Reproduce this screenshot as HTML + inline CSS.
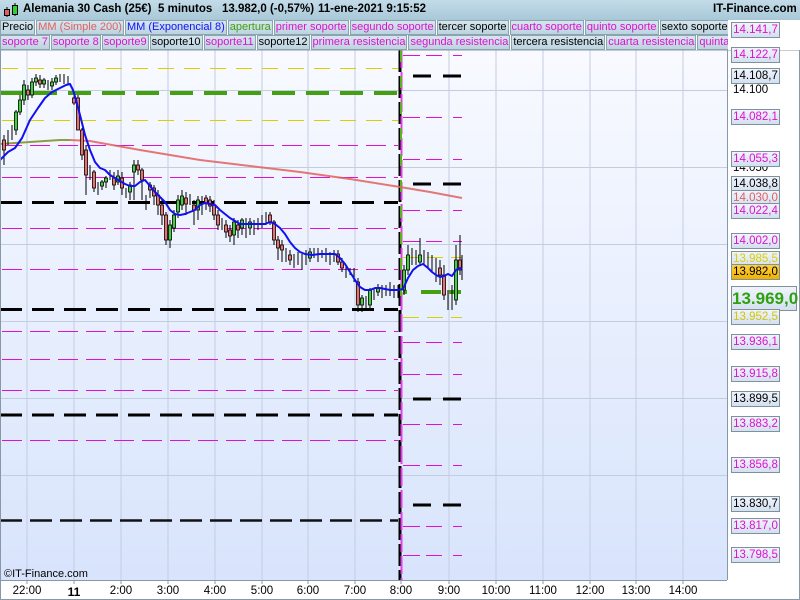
<!DOCTYPE html>
<html><head><meta charset="utf-8"><style>
*{margin:0;padding:0;box-sizing:border-box}
body{width:800px;height:600px;overflow:hidden;background:#fff;font-family:"Liberation Sans",sans-serif;position:relative}
#title{position:absolute;left:0;top:0;width:800px;height:20px;background:linear-gradient(#c4dce8,#a8c8d8);font-weight:bold;font-size:11.5px;color:#000;white-space:nowrap}
#title span{position:absolute;top:3px}
.row{position:absolute;left:0;width:728px;height:15px;background:#fff;white-space:nowrap;overflow:hidden;font-size:11px}
.row b{display:inline-block;font-weight:normal;height:15px;line-height:13px;padding:0 1px;background:linear-gradient(#d6e6ee,#bcd4e0);border:1px solid #8aa4b0;margin-right:1px;vertical-align:top}
.m{color:#e010d0}.k{color:#000}
.lab{position:absolute;left:731px;width:49px;height:16px;border:1px solid #7e929c;background:linear-gradient(#f0f4fc,#d4e0f0);font-size:11.5px;line-height:14px;text-align:center}
.pl{position:absolute;left:733px;font-size:11.5px}
.tx{position:absolute;top:585px;font-size:11.5px;transform:translateX(-50%)}
</style></head><body>
<div id="title">
<svg style="position:absolute;left:3px;top:2px" width="18" height="16"><line x1="4" y1="5" x2="4" y2="15" stroke="#000"/><rect x="1.5" y="7.5" width="5" height="6" fill="#e06060" stroke="#000"/><line x1="12" y1="1" x2="12" y2="14" stroke="#000"/><rect x="9.5" y="3.5" width="5" height="9" fill="#30d030" stroke="#000"/></svg>
<span style="left:23px">Alemania 30 Cash (25€)</span>
<span style="left:158px">5 minutos</span>
<span style="left:222px">13.982,0 (-0,57%)</span>
<span style="left:318px">11-ene-2021 9:15:52</span>
<span style="left:713px">IT-Finance.com</span>
</div>
<div class="row" style="top:20px"><b class="k">Precio</b><b style="color:#e06060">MM (Simple 200)</b><b style="color:#1010ff">MM (Exponencial 8)</b><b style="color:#40a010">apertura</b><b class="m">primer soporte</b><b class="m">segundo soporte</b><b class="k">tercer soporte</b><b class="m">cuarto soporte</b><b class="m">quinto soporte</b><b class="k">sexto soporte</b></div>
<div class="row" style="top:35px"><b class="m">soporte 7</b><b class="m">soporte 8</b><b class="m">soporte9</b><b class="k">soporte10</b><b class="m">soporte11</b><b class="k">soporte12</b><b class="m">primera resistencia</b><b class="m">segunda resistencia</b><b class="k">tercera resistencia</b><b class="m">cuarta resistencia</b><b class="m">quinta resistencia</b></div>

<svg style="position:absolute;left:0;top:50px" width="800" height="550" viewBox="0 50 800 550">
<defs><linearGradient id="bg" x1="0" y1="0" x2="0" y2="1"><stop offset="0" stop-color="#f8faff"/><stop offset="1" stop-color="#d8e4fc"/></linearGradient></defs>
<rect x="0" y="50" width="727" height="530" fill="url(#bg)"/>
<g stroke="#c4cce0" stroke-width="1">
<line x1="27" y1="50" x2="27" y2="580"/><line x1="74" y1="50" x2="74" y2="580"/><line x1="121" y1="50" x2="121" y2="580"/><line x1="168" y1="50" x2="168" y2="580"/><line x1="215" y1="50" x2="215" y2="580"/><line x1="262" y1="50" x2="262" y2="580"/><line x1="308" y1="50" x2="308" y2="580"/><line x1="355" y1="50" x2="355" y2="580"/><line x1="449" y1="50" x2="449" y2="580"/><line x1="496" y1="50" x2="496" y2="580"/><line x1="543" y1="50" x2="543" y2="580"/><line x1="590" y1="50" x2="590" y2="580"/><line x1="636" y1="50" x2="636" y2="580"/><line x1="683" y1="50" x2="683" y2="580"/>
<line x1="0" y1="90.5" x2="727" y2="90.5"/><line x1="0" y1="167.5" x2="727" y2="167.5"/><line x1="0" y1="244.5" x2="727" y2="244.5"/><line x1="0" y1="321.5" x2="727" y2="321.5"/><line x1="0" y1="398.5" x2="727" y2="398.5"/><line x1="0" y1="475.5" x2="727" y2="475.5"/>
</g>
<g fill="none">
<g stroke="#d8d000" stroke-width="1" stroke-dasharray="16 10"><line x1="2" y1="68.5" x2="398" y2="68.5"/><line x1="2" y1="120.5" x2="398" y2="120.5"/></g>
<line x1="0" y1="93" x2="398" y2="93" stroke="#44a010" stroke-width="4" stroke-dasharray="23 11"/>
<g stroke="#e010d0" stroke-width="1" stroke-dasharray="20 8"><line x1="2" y1="145.5" x2="398" y2="145.5"/><line x1="2" y1="177.5" x2="398" y2="177.5"/><line x1="2" y1="228.5" x2="398" y2="228.5"/><line x1="2" y1="269.5" x2="398" y2="269.5"/><line x1="2" y1="331.5" x2="398" y2="331.5"/><line x1="2" y1="359.5" x2="398" y2="359.5"/><line x1="2" y1="390.5" x2="398" y2="390.5"/><line x1="2" y1="440.5" x2="398" y2="440.5"/></g>
<g stroke="#000" stroke-width="3" stroke-dasharray="22 10"><line x1="0" y1="202.5" x2="398" y2="202.5"/><line x1="0" y1="309.5" x2="398" y2="309.5"/><line x1="0" y1="415" x2="398" y2="415"/></g>
<line x1="0" y1="520.5" x2="398" y2="520.5" stroke="#111" stroke-width="2.5" stroke-dasharray="22 8"/>
<g stroke="#e010d0" stroke-width="1" stroke-dasharray="17 6 16 11 12 100"><line x1="403" y1="55.5" x2="462" y2="55.5"/><line x1="403" y1="117.5" x2="462" y2="117.5"/><line x1="403" y1="159.5" x2="462" y2="159.5"/><line x1="403" y1="210.5" x2="462" y2="210.5"/><line x1="403" y1="241.5" x2="462" y2="241.5"/><line x1="403" y1="342.5" x2="462" y2="342.5"/><line x1="403" y1="374.5" x2="462" y2="374.5"/><line x1="403" y1="424.5" x2="462" y2="424.5"/><line x1="403" y1="465.5" x2="462" y2="465.5"/><line x1="403" y1="526.5" x2="462" y2="526.5"/><line x1="403" y1="555.5" x2="462" y2="555.5"/></g>
<g stroke="#000" stroke-width="3" stroke-dasharray="0 13 18 12 18 100"><line x1="400" y1="76" x2="462" y2="76"/><line x1="400" y1="184" x2="462" y2="184"/><line x1="400" y1="399" x2="462" y2="399"/><line x1="400" y1="505" x2="462" y2="505"/></g>
<g stroke="#d8d000" stroke-width="1" stroke-dasharray="16 8"><line x1="403" y1="257.5" x2="462" y2="257.5"/><line x1="403" y1="317.5" x2="462" y2="317.5"/></g>
<line x1="403" y1="292" x2="462" y2="292" stroke="#44a010" stroke-width="4" stroke-dasharray="4 14 20 8 12 100"/>
<line x1="400" y1="50" x2="400" y2="580" stroke="#000" stroke-width="3" stroke-dasharray="22 4"/>
<line x1="401.5" y1="50" x2="401.5" y2="580" stroke="#e040e0" stroke-width="2" stroke-dasharray="18 4"/>
<line x1="401" y1="50" x2="401" y2="310" stroke="#60b020" stroke-width="2" stroke-dasharray="12 14"/>
</g>
<polyline fill="none" stroke="#8aa040" stroke-width="2" points="0,144 30,142 60,140 70,140"/>
<polyline fill="none" stroke="#e06060" stroke-width="2" opacity="0.85" points="70,140 90,141 140,150 200,160 250,166 300,172 350,179 400,187 430,192 462,198"/>
<g stroke="#000" stroke-width="1">
<path d="M4 135V165M8 130V145M12 125V140M16 110V135M20 95V115M24 80V105M28 85V100M32 78V98M36 74V86M40 75V88M44 78V88M48 80V90M52 78V90M56 75V85M60 74V82M64 74V84M68 76V85M74 95V105M78 95V130M82 128V160M86 145V195M90 165V180M94 170V192M98 182V195M102 180V190M106 176V188M110 170V180M114 172V190M118 170V185M122 172V195M126 188V198M130 182V200M134 160V200M138 160V175M142 168V200M146 195V210M150 182V198M154 185V205M158 190V215M162 200V225M166 212V245M170 220V248M174 210V232M178 195V218M182 190V210M186 192V215M190 194V205M194 200V225M198 196V220M202 196V215M206 195V210M210 196V212M214 200V220M218 210V230M222 218V230M226 220V238M230 225V242M234 218V245M238 220V238M242 218V235M246 218V238M250 218V235M254 220V235M258 218V230M262 215V228M266 212V225M270 212V225M274 220V245M278 236V260M282 240V262M286 248V262M290 250V265M294 254V268M298 252V265M302 254V270M306 250V265M310 248V262M314 248V258M318 248V262M322 250V258M326 248V262M330 252V265M334 250V262M338 250V265M342 258V272M346 265V278M350 268V275M354 268V282M358 278V312M362 295V312M366 296V310M370 288V310M374 288V300M378 284V296M382 285V298M386 285V296M390 282V296M394 285V298M398 285V298M404 265V295M408 245V275M412 248V265M416 250V265M420 238V265M424 250V265M428 252V268M432 255V272M436 258V282M440 260V285M444 265V300M448 290V310M452 285V310M456 245V305M460 235V275M462 255V280"/>
</g>
<g stroke="#000" stroke-width="0.8">
<g fill="#40d040">
<rect x="14.5" y="112" width="3" height="18"/><rect x="18.5" y="100" width="3" height="12"/><rect x="22.5" y="85" width="3" height="15"/><rect x="30.5" y="82" width="3" height="13"/><rect x="34.5" y="78" width="3" height="4"/><rect x="42.5" y="80" width="3" height="4"/><rect x="50.5" y="82" width="3" height="4"/><rect x="54.5" y="78" width="3" height="4"/><rect x="100.5" y="182" width="3" height="4"/><rect x="104.5" y="178" width="3" height="4"/><rect x="116.5" y="176" width="3" height="6"/><rect x="128.5" y="185" width="3" height="7"/><rect x="132.5" y="165" width="3" height="7"/><rect x="168.5" y="225" width="3" height="15"/><rect x="172.5" y="215" width="3" height="13"/><rect x="176.5" y="200" width="3" height="12"/><rect x="180.5" y="196" width="3" height="9"/><rect x="196.5" y="200" width="3" height="10"/><rect x="232.5" y="222" width="3" height="13"/><rect x="240.5" y="220" width="3" height="8"/><rect x="248.5" y="222" width="3" height="6"/><rect x="308.5" y="252" width="3" height="6"/><rect x="360.5" y="298" width="3" height="7"/><rect x="368.5" y="290" width="3" height="15"/><rect x="376.5" y="288" width="3" height="4"/><rect x="402.5" y="270" width="3" height="20"/><rect x="406.5" y="255" width="3" height="15"/><rect x="418.5" y="255" width="3" height="7"/><rect x="454.5" y="260" width="3" height="40"/>
</g>
<g fill="#e87070">
<rect x="2.5" y="140" width="3" height="10"/><rect x="26.5" y="90" width="3" height="5"/><rect x="38.5" y="80" width="3" height="4"/><rect x="72.5" y="98" width="3" height="5"/><rect x="76.5" y="98" width="3" height="32"/><rect x="80.5" y="130" width="3" height="25"/><rect x="84.5" y="150" width="3" height="25"/><rect x="92.5" y="172" width="3" height="16"/><rect x="112.5" y="178" width="3" height="7"/><rect x="120.5" y="178" width="3" height="10"/><rect x="136.5" y="165" width="3" height="5"/><rect x="140.5" y="170" width="3" height="10"/><rect x="148.5" y="185" width="3" height="5"/><rect x="152.5" y="188" width="3" height="8"/><rect x="156.5" y="195" width="3" height="10"/><rect x="160.5" y="205" width="3" height="10"/><rect x="164.5" y="215" width="3" height="25"/><rect x="184.5" y="198" width="3" height="6"/><rect x="192.5" y="205" width="3" height="5"/><rect x="204.5" y="198" width="3" height="5"/><rect x="208.5" y="200" width="3" height="6"/><rect x="212.5" y="205" width="3" height="10"/><rect x="216.5" y="215" width="3" height="10"/><rect x="224.5" y="225" width="3" height="7"/><rect x="228.5" y="230" width="3" height="6"/><rect x="236.5" y="225" width="3" height="5"/><rect x="268.5" y="215" width="3" height="7"/><rect x="272.5" y="222" width="3" height="18"/><rect x="276.5" y="240" width="3" height="8"/><rect x="280.5" y="245" width="3" height="5"/><rect x="288.5" y="255" width="3" height="5"/><rect x="336.5" y="254" width="3" height="8"/><rect x="340.5" y="262" width="3" height="6"/><rect x="356.5" y="282" width="3" height="23"/><rect x="438.5" y="268" width="3" height="7"/><rect x="442.5" y="275" width="3" height="20"/><rect x="458.5" y="260" width="3" height="10"/>
</g>
</g>
<polyline fill="none" stroke="#1010f0" stroke-width="2" stroke-linejoin="round" points="0,160 8,152 15,148 22,138 30,120 38,108 45,98 52,92 60,88 66,85 70,84 73,90 76,100 80,115 85,135 90,150 95,162 100,168 105,170 110,175 115,178 120,181 125,184 130,186 135,186 140,182 145,180 150,186 155,192 160,197 165,202 170,210 175,214 180,215 185,214 190,212 195,210 200,205 205,203 210,204 215,205 220,210 225,214 230,218 240,224 250,224 260,224 265,224 270,222 275,224 280,228 285,234 290,242 295,248 300,252 305,254 312,255 320,254 328,254 335,254 340,258 345,264 350,272 355,280 360,287 365,290 370,290 375,288 380,288 385,289 390,290 398,290 403,289 408,278 413,270 418,266 423,264 428,268 432,272 436,275 440,277 444,276 448,274 452,276 456,270 460,268 462,269"/>
<line x1="727.5" y1="50" x2="727.5" y2="580" stroke="#8898a8"/>
<line x1="0" y1="580.5" x2="727" y2="580.5" stroke="#8898a8"/>
<g stroke="#8898a8"><line x1="27" y1="580" x2="27" y2="584"/><line x1="74" y1="580" x2="74" y2="584"/><line x1="121" y1="580" x2="121" y2="584"/><line x1="168" y1="580" x2="168" y2="584"/><line x1="215" y1="580" x2="215" y2="584"/><line x1="262" y1="580" x2="262" y2="584"/><line x1="308" y1="580" x2="308" y2="584"/><line x1="355" y1="580" x2="355" y2="584"/><line x1="401" y1="580" x2="401" y2="584"/><line x1="449" y1="580" x2="449" y2="584"/><line x1="496" y1="580" x2="496" y2="584"/><line x1="543" y1="580" x2="543" y2="584"/><line x1="590" y1="580" x2="590" y2="584"/><line x1="636" y1="580" x2="636" y2="584"/><line x1="683" y1="580" x2="683" y2="584"/></g>
<rect x="0.5" y="50" width="799" height="549.5" fill="none" stroke="#8898a8"/>
<text x="4" y="577" font-family="Liberation Sans" font-size="11" fill="#000">©IT-Finance.com</text>
</svg>

<span class="pl" style="top:84px">14.100</span>
<span class="pl" style="top:162px">14.050</span>
<div class="lab m" style="top:22px">14.141,7</div>
<div class="lab m" style="top:47px">14.122,7</div>
<div class="lab k" style="top:68px">14.108,7</div>
<div class="lab m" style="top:109px">14.082,1</div>
<div class="lab m" style="top:151px">14.055,3</div>
<div class="lab k" style="top:176px">14.038,8</div>
<div class="lab" style="top:190px;color:#e06060">14.030,0</div>
<div class="lab m" style="top:203px">14.022,4</div>
<div class="lab m" style="top:233px">14.002,0</div>
<div class="lab" style="top:251px;color:#d8d000">13.985,5</div>
<div class="lab" style="top:264px;background:linear-gradient(#ffd040,#f0b000);color:#000">13.982,0</div>
<div class="lab" style="top:286px;width:66px;height:25px;font-size:17px;line-height:23px;font-weight:bold;color:#30a010">13.969,0</div>
<div class="lab" style="top:309px;color:#d0c800">13.952,5</div>
<div class="lab m" style="top:334px">13.936,1</div>
<div class="lab m" style="top:366px">13.915,8</div>
<div class="lab k" style="top:391px">13.899,5</div>
<div class="lab m" style="top:416px">13.883,2</div>
<div class="lab m" style="top:457px">13.856,8</div>
<div class="lab k" style="top:496px">13.830,7</div>
<div class="lab m" style="top:518px">13.817,0</div>
<div class="lab m" style="top:547px">13.798,5</div>

<span class="tx" style="left:27px">22:00</span>
<span class="tx" style="left:74px;font-weight:bold;font-size:12px">11</span>
<span class="tx" style="left:121px">2:00</span><span class="tx" style="left:168px">3:00</span><span class="tx" style="left:215px">4:00</span><span class="tx" style="left:262px">5:00</span><span class="tx" style="left:308px">6:00</span><span class="tx" style="left:355px">7:00</span><span class="tx" style="left:401px">8:00</span><span class="tx" style="left:449px">9:00</span><span class="tx" style="left:496px">10:00</span><span class="tx" style="left:543px">11:00</span><span class="tx" style="left:590px">12:00</span><span class="tx" style="left:636px">13:00</span><span class="tx" style="left:683px">14:00</span>
</body></html>
